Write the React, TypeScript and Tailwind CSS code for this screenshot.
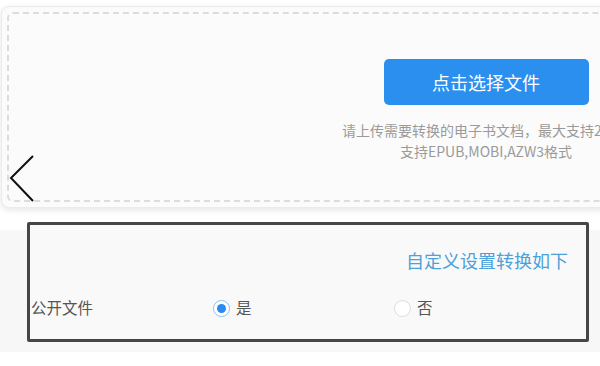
import React from "react";

export default function App() {
  return (
    <div
      className="relative w-[600px] h-[366px] overflow-hidden bg-white"
      style={{ fontFamily: '"Noto Sans CJK SC", "Noto Sans", sans-serif' }}
    >
      {/* upload card */}
      <div className="ml-[1px] mt-[6px] w-[970px] h-[202px] rounded-[8px] border border-[#ebebeb] bg-[#fbfbfb] p-[5px] shadow-[0_2px_6px_rgba(0,0,0,0.10)]">
        <div className="flex h-full flex-col items-center rounded-[6px] border-2 border-dashed border-[#dcdcdc] pt-[45px]">
          <button className="flex h-[46px] w-[205px] items-center justify-center rounded-[5px] bg-[#2b8ff0] text-[18px] text-white">
            点击选择文件
          </button>
          <div className="mt-[15px] text-center text-[14px] leading-[21px] text-[#9a9a9a]">
            <div>请上传需要转换的电子书文档，最大支持20MB</div>
            <div>支持EPUB,MOBI,AZW3格式</div>
          </div>
        </div>
      </div>

      {/* settings band */}
      <div className="mt-[22px] flex h-[122px] flex-col bg-[#f7f7f7] pb-[10px]">
        <div className="-mt-[8px] ml-[27px] h-[120px] w-[562px] shrink-0 rounded-[2px] border-[3px] border-[#464646] bg-[#faf9fa]">
          <div className="flex justify-end pr-[18px] pt-[23px] text-[18px] leading-[24px] text-[#4ba1d9]">
            自定义设置转换如下
          </div>
          <div className="mt-[24px] flex h-[24px] items-center text-[15.5px] text-[#555]">
            <div className="w-[183px] pl-[1px]">公开文件</div>
            <div className="flex w-[181px] items-center gap-[6px]">
              <span className="flex h-[17px] w-[17px] items-center justify-center rounded-full border border-[#8fc1f2] bg-white">
                <span className="h-[9px] w-[9px] rounded-full bg-[#2a8bef]" />
              </span>
              <span>是</span>
            </div>
            <div className="flex items-center gap-[6px]">
              <span className="h-[17px] w-[17px] rounded-full border border-[#dcdcdc] bg-white" />
              <span>否</span>
            </div>
          </div>
        </div>
      </div>

      {/* carousel arrow */}
      <svg
        className="absolute left-[9px] top-[155px]"
        width="26"
        height="48"
        viewBox="0 0 26 48"
        fill="none"
      >
        <polyline points="24,1 2,23 24,46" stroke="#111" strokeWidth="2" />
      </svg>
    </div>
  );
}
